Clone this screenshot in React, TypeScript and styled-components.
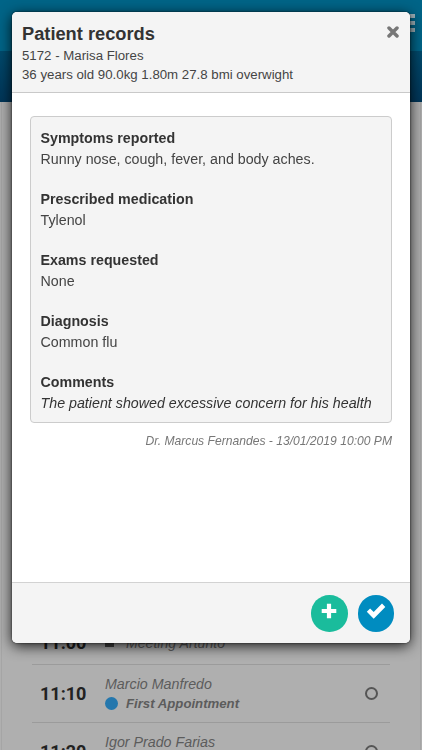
import styled, { createGlobalStyle } from "styled-components";

const records = [
  { title: "Symptoms reported", text: "Runny nose, cough, fever, and body aches." },
  { title: "Prescribed medication", text: "Tylenol" },
  { title: "Exams requested", text: "None" },
  { title: "Diagnosis", text: "Common flu" },
  {
    title: "Comments",
    text: "The patient showed excessive concern for his health",
    italic: true,
  },
];

const appointments = [
  { time: "11:00", label: "Meeting Artunto", meeting: true },
  { time: "11:10", name: "Marcio Manfredo", label: "First Appointment" },
  { time: "11:20", name: "Igor Prado Farias" },
];

export default function App() {
  return (
    <>
      <GlobalStyle />
      <Page>
        <TopBar>
          <MenuIcon>
            <i />
            <i />
            <i />
          </MenuIcon>
        </TopBar>
        <DateBar />
        <Agenda>
          {appointments.map((item) => (
            <Appointment key={item.time} $short={item.meeting}>
              <Time>{item.time}</Time>
              <Details>
                {item.name && <Name>{item.name}</Name>}
                <Kind $meeting={item.meeting}>
                  {item.label && <Marker $square={item.meeting} />}
                  {item.label}
                </Kind>
              </Details>
              {!item.meeting && <Status />}
            </Appointment>
          ))}
        </Agenda>
      </Page>
      <Overlay>
        <Modal>
          <ModalHeader>
            <div>
              <ModalTitle>Patient records</ModalTitle>
              <PatientInfo>5172 - Marisa Flores</PatientInfo>
              <PatientInfo>
                36 years old 90.0kg 1.80m 27.8 bmi overwight
              </PatientInfo>
            </div>
            <CloseButton aria-label="Close">
              <svg width="12" height="12" viewBox="0 0 12 12">
                <path
                  d="M2 2L10 10M10 2L2 10"
                  stroke="#777777"
                  strokeWidth="3.5"
                  strokeLinecap="round"
                />
              </svg>
            </CloseButton>
          </ModalHeader>
          <ModalBody>
            <RecordCard>
              {records.map((record) => (
                <Record key={record.title}>
                  <dt>{record.title}</dt>
                  <RecordText $italic={record.italic}>{record.text}</RecordText>
                </Record>
              ))}
            </RecordCard>
            <Signature>Dr. Marcus Fernandes - 13/01/2019 10:00 PM</Signature>
          </ModalBody>
          <ModalFooter>
            <RoundButton $color="#1abc9c" aria-label="Add record">
              <svg width="16" height="16" viewBox="0 0 16 16">
                <path
                  d="M5.9.7h4.2v5.2h5.2v4.2h-5.2v5.2H5.9v-5.2H.7V5.9h5.2z"
                  fill="#ffffff"
                />
              </svg>
            </RoundButton>
            <RoundButton $color="#008cc0" aria-label="Confirm">
              <svg width="20" height="16" viewBox="0 0 20 16">
                <path
                  d="M.8 8.8L4.1 5.5L7.7 9L16 .5L19.3 3.9L7.7 15.7z"
                  fill="#ffffff"
                />
              </svg>
            </RoundButton>
          </ModalFooter>
        </Modal>
      </Overlay>
    </>
  );
}

const GlobalStyle = createGlobalStyle`
  * {
    box-sizing: border-box;
  }

  body {
    margin: 0;
    background: #afafaf;
    font-family: "Liberation Sans", Arial, sans-serif;
    color: #333333;
  }
`;

const Page = styled.main`
  height: 750px;
  overflow: hidden;
`;

const TopBar = styled.header`
  display: flex;
  justify-content: flex-end;
  height: 51px;
  padding: 14px 7px 0 0;
  background: #006487;
`;

const MenuIcon = styled.div`
  display: flex;
  flex-direction: column;
  gap: 3px;
  width: 18px;

  i {
    height: 4px;
    background: #9fb3bb;
  }
`;

const DateBar = styled.div`
  height: 51px;
  background: linear-gradient(#004a6c, #003558);
`;

const Agenda = styled.section`
  margin: 0 1px;
  padding: 519px 30px 0;
  border: solid #a5a5a5;
  border-width: 0 1px;
`;

const Appointment = styled.div<{ $short?: boolean }>`
  display: flex;
  align-items: center;
  height: ${(props) => (props.$short ? "44px" : "58px")};
  padding: 0 12px 0 8px;
  border-bottom: 1px solid #9b9b9b;
`;

const Time = styled.strong`
  width: 65px;
  font-family: Roboto, "Liberation Sans", sans-serif;
  font-size: 18px;
  line-height: 20px;
  color: #222222;
`;

const Details = styled.div`
  flex: 1;
  font-style: italic;
  color: #5c5c5c;
`;

const Name = styled.div`
  font-size: 14.25px;
  line-height: 20px;
`;

const Kind = styled.div<{ $meeting?: boolean }>`
  display: flex;
  align-items: center;
  gap: 8px;
  height: 20px;
  font-size: ${(props) => (props.$meeting ? "14.1px" : "13.2px")};
  font-weight: ${(props) => (props.$meeting ? 400 : 700)};
`;

const Marker = styled.span<{ $square?: boolean }>`
  width: ${(props) => (props.$square ? "9px" : "13px")};
  height: ${(props) => (props.$square ? "9px" : "13px")};
  margin-right: ${(props) => (props.$square ? "4px" : "0")};
  border-radius: ${(props) => (props.$square ? "0" : "50%")};
  background: ${(props) => (props.$square ? "#444444" : "#2477ad")};
`;

const Status = styled.span`
  width: 13px;
  height: 13px;
  border: 2px solid #555555;
  border-radius: 50%;
`;

const Overlay = styled.div`
  position: fixed;
  inset: 0;
  padding: 12px 12px 107px 11.5px;
`;

const Modal = styled.div`
  display: flex;
  flex-direction: column;
  height: 100%;
  border-radius: 5px;
  background: #ffffff;
  box-shadow: 0 3px 14px rgba(0, 0, 0, 0.85), 0 0 2px rgba(0, 0, 0, 0.8);
  overflow: hidden;
`;

const ModalHeader = styled.div`
  display: flex;
  justify-content: space-between;
  height: 81px;
  padding: 10px 11.5px 0 10.5px;
  border-bottom: 1px solid #c9c9c9;
  background: #f4f4f4;
`;

const ModalTitle = styled.h1`
  margin: 0 0 1px;
  font-size: 18.25px;
  line-height: 24px;
`;

const PatientInfo = styled.div`
  font-size: 13.25px;
  line-height: 18.5px;
  color: #444444;
`;

const CloseButton = styled.button`
  display: flex;
  width: 12px;
  height: 12px;
  margin-top: 4px;
  padding: 0;
  border: none;
  background: none;
`;

const ModalBody = styled.div`
  flex: 1;
  padding: 23px 18px 0;
`;

const RecordCard = styled.dl`
  height: 307px;
  margin: 0;
  padding: 11px 10px;
  border: 1px solid #cccccc;
  border-radius: 4px;
  background: #f4f4f4;
`;

const Record = styled.div`
  margin-bottom: 20px;
  font-size: 14.25px;
  line-height: 20.5px;

  dt {
    font-weight: 700;
  }
`;

const RecordText = styled.dd<{ $italic?: boolean }>`
  margin: 0;
  font-style: ${(props) => (props.$italic ? "italic" : "normal")};
  color: ${(props) => (props.$italic ? "#333333" : "#444444")};
  white-space: nowrap;
`;

const Signature = styled.p`
  margin: 9px 0 0;
  font-size: 12.12px;
  font-style: italic;
  line-height: 18px;
  text-align: right;
  color: #777777;
`;

const ModalFooter = styled.div`
  display: flex;
  justify-content: flex-end;
  gap: 10px;
  height: 61px;
  padding: 12px 16px 0 0;
  border-top: 1px solid #d2d2d2;
  background: #f4f4f4;
`;

const RoundButton = styled.button<{ $color: string }>`
  display: flex;
  align-items: center;
  justify-content: center;
  width: 36.5px;
  height: 36.5px;
  padding: 0 0 4px;
  border: none;
  border-radius: 50%;
  background: ${(props) => props.$color};
`;
